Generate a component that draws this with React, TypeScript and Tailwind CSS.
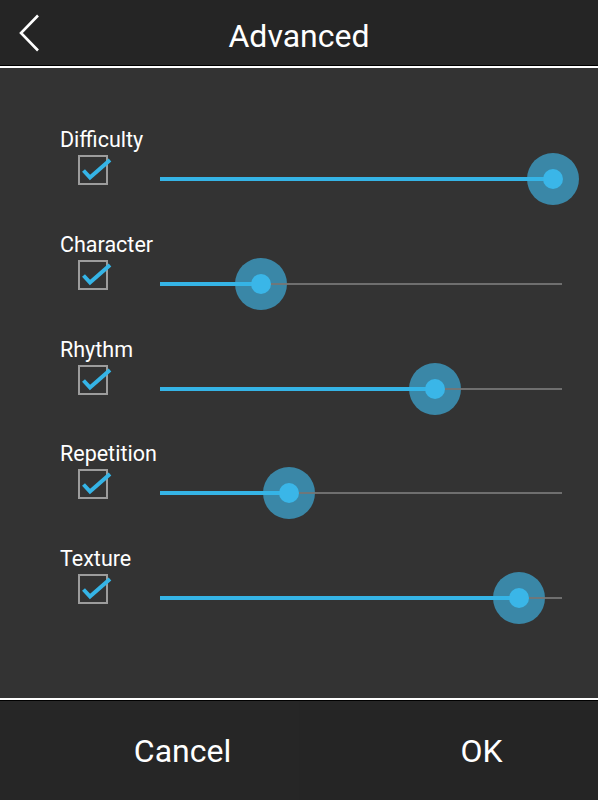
import React from "react";

const rows = [
  { label: "Difficulty", x: 553 },
  { label: "Character", x: 261 },
  { label: "Rhythm", x: 435 },
  { label: "Repetition", x: 289 },
  { label: "Texture", x: 519 },
];

const TRACK_START = 160;

function Checkbox() {
  return (
    <div className="relative mt-[3px] h-[30px] w-[30px] shrink-0 border-2 border-[#9c9c9c]">
      <svg
        className="absolute left-[-2px] top-[-2px] overflow-visible"
        width="30"
        height="30"
        viewBox="0 0 30 30"
      >
        <polyline
          points="5.5,15.5 12,22.5 32,5"
          fill="none"
          stroke="#35b4e6"
          strokeWidth="4"
        />
      </svg>
    </div>
  );
}

function Slider({ x }: { x: number }) {
  const pos = x - TRACK_START;
  return (
    <div className="relative ml-[52px] mt-[1px] h-[52px] w-[402px]">
      <div
        className="absolute top-0 h-[52px] w-[52px] rounded-full bg-[#3a87a7]"
        style={{ left: pos - 26 }}
      />
      <div className="absolute left-0 right-0 top-[25px] h-[2px] bg-[#767676] opacity-90" />
      <div
        className="absolute left-0 top-[24px] h-[4px] bg-[#35b4e6]"
        style={{ width: pos }}
      />
      <div
        className="absolute top-[16px] h-[20px] w-[20px] rounded-full bg-[#3ab6e8]"
        style={{ left: pos - 10 }}
      />
    </div>
  );
}

export default function App() {
  return (
    <div
      className="flex h-[800px] w-[598px] flex-col overflow-hidden bg-[#333333] text-white"
      style={{ fontFamily: "Roboto, 'Liberation Sans', sans-serif" }}
    >
      <div className="relative flex h-[65px] shrink-0 items-center justify-center bg-[#252525] pt-[7px]">
        <svg
          className="absolute left-0 top-0"
          width="50"
          height="65"
          viewBox="0 0 50 65"
        >
          <polyline
            points="38,15.5 21,33 38,50.5"
            fill="none"
            stroke="#ffffff"
            strokeWidth="2.6"
          />
        </svg>
        <span className="text-[32px] leading-[32px]">Advanced</span>
      </div>
      <div className="h-[1px] shrink-0 bg-black" />
      <div className="h-[2px] shrink-0 bg-white" />
      <div className="flex h-[630px] shrink-0 flex-col bg-[#333333] pl-[60px] pt-[60px]">
        {rows.map((r) => (
          <div key={r.label} className="flex h-[104.75px] shrink-0 flex-col">
            <div className="h-[24px] text-[21.5px] leading-[24px]">{r.label}</div>
            <div className="flex items-start pl-[18px]">
              <Checkbox />
              <Slider x={r.x} />
            </div>
          </div>
        ))}
      </div>
      <div className="h-[2px] shrink-0 bg-white" />
      <div className="h-[1px] shrink-0 bg-black" />
      <div className="flex h-[99px] shrink-0">
        <div className="flex flex-1 items-center justify-center bg-[#262626] pl-[66px]">
          <span className="text-[32px] leading-[32px]">Cancel</span>
        </div>
        <div className="flex flex-1 items-center justify-center bg-[#252525] pl-[66px]">
          <span className="text-[32px] leading-[32px]">OK</span>
        </div>
      </div>
    </div>
  );
}
